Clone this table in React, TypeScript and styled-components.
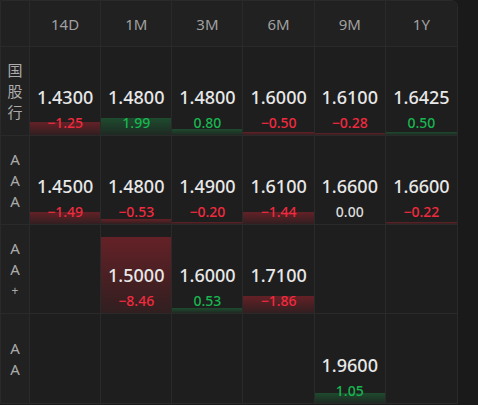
import styled, { createGlobalStyle } from "styled-components";

const GlobalStyle = createGlobalStyle`
  html, body {
    margin: 0;
    padding: 0;
    background: #1a1a1a;
  }
  body {
    font-family: "Noto Sans", "Noto Sans CJK SC", sans-serif;
  }
`;

const Page = styled.div`
  width: 478px;
  height: 405px;
  background: #1a1a1a;
`;

const Table = styled.div`
  width: 458px;
  height: 404px;
  box-sizing: border-box;
  display: grid;
  grid-template-columns: 29px repeat(6, 1fr);
  grid-template-rows: 46px repeat(4, 1fr);
  background: #1e1e1e;
  border: 1px solid #2a2a2a;
  border-top-right-radius: 7px;
  overflow: hidden;
`;

const Corner = styled.div`
  background: #212121;
  border-right: 1px solid #2a2a2a;
  border-bottom: 1px solid #2a2a2a;
`;

const HeadCell = styled.div<{ $last?: boolean }>`
  display: flex;
  align-items: center;
  justify-content: center;
  background: #212121;
  color: #a0a0a0;
  font-size: 15px;
  border-right: ${(p) => (p.$last ? "none" : "1px solid #2a2a2a")};
  border-bottom: 1px solid #2a2a2a;
`;

const Label = styled.div<{ $last?: boolean }>`
  display: flex;
  flex-direction: column;
  align-items: center;
  justify-content: center;
  background: #212121;
  color: #ababab;
  font-size: 15px;
  line-height: 21px;
  border-right: 1px solid #2a2a2a;
  border-bottom: ${(p) => (p.$last ? "none" : "1px solid #2a2a2a")};
`;

const Plus = styled.span`
  font-size: 12px;
`;

const Cell = styled.div<{ $lastCol?: boolean; $lastRow?: boolean }>`
  position: relative;
  display: flex;
  flex-direction: column;
  align-items: center;
  justify-content: flex-end;
  padding-bottom: 4px;
  border-right: ${(p) => (p.$lastCol ? "none" : "1px solid #2a2a2a")};
  border-bottom: ${(p) => (p.$lastRow ? "none" : "1px solid #2a2a2a")};
`;

type Tone = "up" | "down" | "flat";

const barColors: Record<Tone, [string, string]> = {
  down: ["rgba(214, 38, 52, 0.38)", "rgba(214, 38, 52, 0.10)"],
  up: ["rgba(30, 170, 80, 0.32)", "rgba(30, 170, 80, 0.08)"],
  flat: ["transparent", "transparent"],
};

const Bar = styled.div<{ $tone: Tone }>`
  position: absolute;
  left: 0;
  right: 0;
  bottom: 0;
  background: linear-gradient(
    to bottom,
    ${(p) => barColors[p.$tone][0]},
    ${(p) => barColors[p.$tone][1]}
  );
`;

const Value = styled.div`
  position: relative;
  color: #e8e8e8;
  font-size: 18px;
  font-weight: 500;
  line-height: 24px;
`;

const Change = styled.div<{ $tone: Tone }>`
  position: relative;
  margin-top: 5px;
  font-size: 14px;
  font-weight: 500;
  line-height: 17px;
  color: ${(p) =>
    p.$tone === "down" ? "#f22a3e" : p.$tone === "up" ? "#18b650" : "#dcdcdc"};
`;

type Quote = { value: string; change: number; bar: number } | null;

const tenors = ["14D", "1M", "3M", "6M", "9M", "1Y"];

const rows: { label: string[]; quotes: Quote[] }[] = [
  {
    label: ["国", "股", "行"],
    quotes: [
      { value: "1.4300", change: -1.25, bar: 13 },
      { value: "1.4800", change: 1.99, bar: 17 },
      { value: "1.4800", change: 0.8, bar: 6 },
      { value: "1.6000", change: -0.5, bar: 3 },
      { value: "1.6100", change: -0.28, bar: 2 },
      { value: "1.6425", change: 0.5, bar: 3 },
    ],
  },
  {
    label: ["A", "A", "A"],
    quotes: [
      { value: "1.4500", change: -1.49, bar: 12 },
      { value: "1.4800", change: -0.53, bar: 5 },
      { value: "1.4900", change: -0.2, bar: 2 },
      { value: "1.6100", change: -1.44, bar: 12 },
      { value: "1.6600", change: 0, bar: 0 },
      { value: "1.6600", change: -0.22, bar: 2 },
    ],
  },
  {
    label: ["A", "A", "+"],
    quotes: [
      null,
      { value: "1.5000", change: -8.46, bar: 76 },
      { value: "1.6000", change: 0.53, bar: 5 },
      { value: "1.7100", change: -1.86, bar: 17 },
      null,
      null,
    ],
  },
  {
    label: ["A", "A"],
    quotes: [null, null, null, null, { value: "1.9600", change: 1.05, bar: 10 }, null],
  },
];

const toneOf = (n: number): Tone => (n > 0 ? "up" : n < 0 ? "down" : "flat");
const fmt = (n: number) => (n < 0 ? "\u2212" + Math.abs(n).toFixed(2) : n.toFixed(2));

export default function App() {
  return (
    <Page>
      <GlobalStyle />
      <Table>
        <Corner />
        {tenors.map((t, i) => (
          <HeadCell key={t} $last={i === tenors.length - 1}>
            {t}
          </HeadCell>
        ))}
        {rows.map((row, r) => {
          const lastRow = r === rows.length - 1;
          return [
            <Label key={"l" + r} $last={lastRow}>
              {row.label.map((ch, k) =>
                ch === "+" ? <Plus key={k}>+</Plus> : <span key={k}>{ch}</span>
              )}
            </Label>,
            ...row.quotes.map((q, c) => {
              const tone = q ? toneOf(q.change) : "flat";
              return (
                <Cell key={r + "-" + c} $lastCol={c === 5} $lastRow={lastRow}>
                  {q && (
                    <>
                      <Bar $tone={tone} style={{ height: q.bar }} />
                      <Value>{q.value}</Value>
                      <Change $tone={tone}>{fmt(q.change)}</Change>
                    </>
                  )}
                </Cell>
              );
            }),
          ];
        })}
      </Table>
    </Page>
  );
}
